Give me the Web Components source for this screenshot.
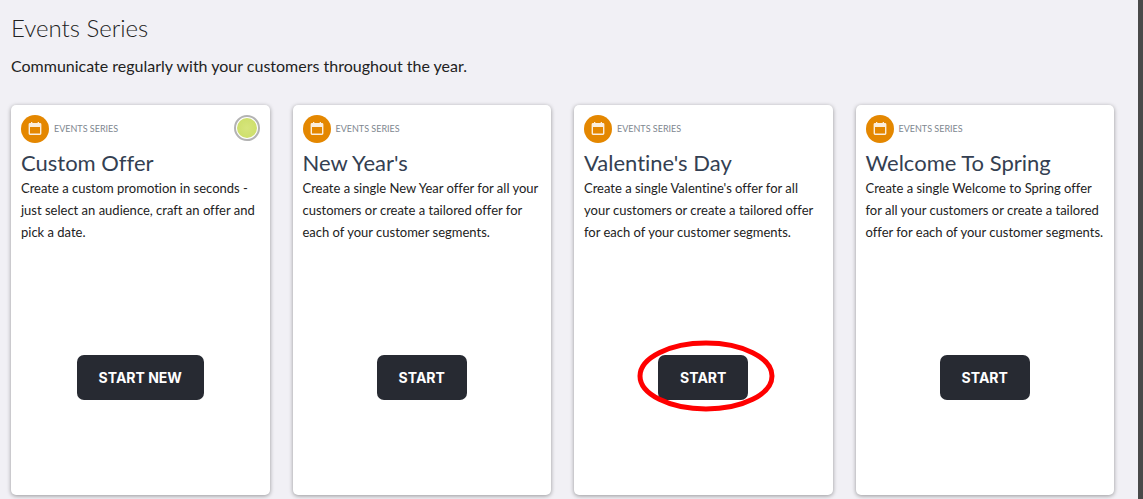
<!DOCTYPE html>
<html lang="en">
<head>
<meta charset="utf-8">
<title>Events Series</title>
<style>
html { background: #f1f0f5; }
body { margin: 0; font-family: Lato, sans-serif; font-variant-ligatures: none; color: #222; }
</style>
</head>
<body>
<event-page>
  <span slot="title">Events Series</span>
  <span slot="intro">Communicate regularly with your customers throughout the year.</span>
  <event-card heading="Custom Offer" action="START NEW" status>Create a custom promotion in seconds - just select an audience, craft an offer and pick a date.</event-card>
  <event-card heading="New Year's" action="START">Create a single New Year offer for all your customers or create a tailored offer for each of your customer segments.</event-card>
  <event-card heading="Valentine's Day" action="START" circled>Create a single Valentine's offer for all your customers or create a tailored offer for each of your customer segments.</event-card>
  <event-card heading="Welcome To Spring" action="START">Create a single Welcome to Spring offer for all your customers or create a tailored offer for each of your customer segments.</event-card>
</event-page>

<template id="page-template">
  <style>
    :host { display: block; box-sizing: border-box; min-height: 100vh; padding: 12px 24px 4px 11px; border-right: 5px solid #494949; }
    h1 { margin: 0; font-size: 24px; line-height: 32px; font-weight: 300; }
    p { margin: 10px 0 27px; font-size: 16px; line-height: 24px; }
    .cards { display: grid; grid-template-columns: repeat(4, minmax(0, 1fr)); gap: 23px; }
  </style>
  <h1><slot name="title"></slot></h1>
  <p><slot name="intro"></slot></p>
  <main class="cards"><slot></slot></main>
</template>

<template id="card-template">
  <style>
    :host { display: flex; flex-direction: column; box-sizing: border-box; min-height: 390px; padding: 10px 10px 95px; border-radius: 5px; background: #fff; box-shadow: 0 1px 4px rgba(0, 0, 0, .38); }
    header { display: flex; align-items: flex-start; gap: 5px; height: 28px; color: #808790; font-size: 9px; line-height: 27px; }
    event-status { margin-left: auto; }
    h2 { margin: 6px 0 0; color: #343f52; font-size: 22px; line-height: 28px; font-weight: 400; }
    p { margin: 0; font-size: 13px; line-height: 22px; }
    footer { margin-top: auto; display: flex; justify-content: center; }
  </style>
  <header><calendar-badge></calendar-badge><span>EVENTS SERIES</span></header>
  <h2></h2>
  <p><slot></slot></p>
  <footer><start-button></start-button></footer>
</template>

<template id="badge-template">
  <style>
    :host { display: grid; place-items: center; width: 28px; height: 28px; border-radius: 50%; background: #e48700; }
    svg { display: block; }
  </style>
  <svg width="14" height="14" viewBox="0 0 14 14" aria-hidden="true">
    <path fill="#fbeedd" fill-rule="evenodd" d="M3 0h1.3v1h5.4V0H11v1h1a1.4 1.4 0 0 1 1.4 1.4v9.2a1.4 1.4 0 0 1-1.4 1.4H2a1.4 1.4 0 0 1-1.4-1.4V2.4A1.400 1.400 0 0 1 2 1h1zM2 5v6.600h10V5z"/>
  </svg>
</template>

<template id="status-template">
  <style>
    :host { display: block; box-sizing: border-box; width: 26px; height: 26px; border: 2px solid #b3b3b3; border-radius: 50%; padding: 1px; background: #fff; }
    div { height: 100%; border-radius: 50%; background: radial-gradient(circle, #d6e57c, #cbdd66); }
  </style>
  <div></div>
</template>

<template id="button-template">
  <style>
    :host { display: block; position: relative; }
    button { display: block; height: 45px; padding: 0 22px; border: 0; border-radius: 7px; background: #272a32; color: #fff; font: 700 14px/20px Inter, sans-serif; cursor: pointer; }
    svg { display: none; position: absolute; left: 50%; top: 50%; width: 138px; height: 72px; margin: -38px 0 0 -66px; pointer-events: none; }
    :host([circled]) svg { display: block; }
  </style>
  <button type="button"></button>
  <svg viewBox="0 0 138 72" aria-hidden="true"><ellipse cx="69" cy="36" rx="66" ry="33" fill="none" stroke="#f00" stroke-width="5"/></svg>
</template>

<script>
function stamp(host, id) {
  const root = host.attachShadow({ mode: "open" });
  root.append(document.getElementById(id).content.cloneNode(true));
  return root;
}
customElements.define("calendar-badge", class extends HTMLElement {
  constructor() { super(); stamp(this, "badge-template"); }
});
customElements.define("event-status", class extends HTMLElement {
  constructor() { super(); stamp(this, "status-template"); }
});
customElements.define("start-button", class extends HTMLElement {
  connectedCallback() {
    if (this.shadowRoot) return;
    stamp(this, "button-template").querySelector("button").textContent = this.getAttribute("label");
  }
});
customElements.define("event-card", class extends HTMLElement {
  connectedCallback() {
    if (this.shadowRoot) return;
    const root = this.attachShadow({ mode: "open" });
    const view = document.getElementById("card-template").content.cloneNode(true);
    view.querySelector("h2").textContent = this.getAttribute("heading");
    const button = view.querySelector("start-button");
    button.setAttribute("label", this.getAttribute("action"));
    button.toggleAttribute("circled", this.hasAttribute("circled"));
    if (this.hasAttribute("status")) view.querySelector("header").append(document.createElement("event-status"));
    root.append(view);
  }
});
customElements.define("event-page", class extends HTMLElement {
  constructor() { super(); stamp(this, "page-template"); }
});
</script>
</body>
</html>
